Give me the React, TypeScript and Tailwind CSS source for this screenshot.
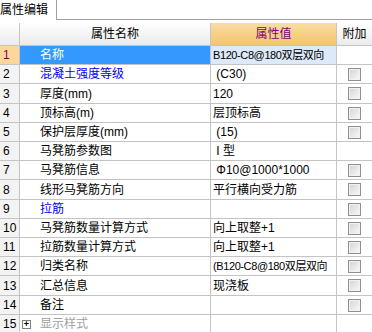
import React from 'react';

interface Row {
  n: number;
  name: string;
  value: string;
  check: boolean;
  blue?: boolean;
  selected?: boolean;
  expand?: boolean;
  tight?: boolean;
}

const rows: Row[] = [
  { n: 1, name: '名称', value: 'B120-C8@180双层双向', check: false, selected: true, tight: true },
  { n: 2, name: '混凝土强度等级', value: ' (C30)', check: true, blue: true },
  { n: 3, name: '厚度(mm)', value: '120', check: true },
  { n: 4, name: '顶标高(m)', value: '层顶标高', check: true },
  { n: 5, name: '保护层厚度(mm)', value: ' (15)', check: true },
  { n: 6, name: '马凳筋参数图', value: ' I 型', check: false },
  { n: 7, name: '马凳筋信息', value: ' Φ10@1000*1000', check: true },
  { n: 8, name: '线形马凳筋方向', value: '平行横向受力筋', check: true },
  { n: 9, name: '拉筋', value: '', check: true, blue: true },
  { n: 10, name: '马凳筋数量计算方式', value: '向上取整+1', check: true },
  { n: 11, name: '拉筋数量计算方式', value: '向上取整+1', check: true },
  { n: 12, name: '归类名称', value: '(B120-C8@180双层双向', check: true, tight: true },
  { n: 13, name: '汇总信息', value: '现浇板', check: true },
  { n: 14, name: '备注', value: '', check: true },
  { n: 15, name: '显示样式', value: '', check: false, expand: true },
];

// row pitch in the grid is ~19.2px, so every fifth row gets one extra pixel
const tallRows = [3, 8, 13];

function CheckBox() {
  return (
    <div className="w-[13px] h-[13px] border border-[#8f8f8f] bg-gradient-to-br from-[#d4d4d4] to-[#fafafa] shadow-[inset_0_0_0_1px_#f2f2f2]" />
  );
}

export default function App() {
  return (
    <div className="w-[372px] h-[332px] overflow-hidden bg-white text-[12px] leading-[14px] text-black font-['Liberation_Sans','Noto_Sans_CJK_SC',sans-serif]">
      {/* Tab strip */}
      <div className="flex h-[20px]">
        <div className="w-[57px] border-r border-[#a0a0a0] flex items-center">属性编辑</div>
        <div className="flex-1 border-b border-[#a0a0a0]" />
      </div>

      <div className="h-[3px]" />

      {/* Header */}
      <div className="flex h-[23px] border-b border-[#c4c4c4]">
        <div className="w-[20px] border-r border-[#c4c4c4] bg-gradient-to-b from-white to-[#ebebeb]" />
        <div className="w-[191px] border-r border-[#c4c4c4] bg-gradient-to-b from-white to-[#ebebeb] flex items-center justify-center">
          属性名称
        </div>
        <div className="w-[126px] border-r border-[#c4c4c4] bg-gradient-to-b from-[#fadca4] to-[#f2c470] text-[#800080] flex items-center justify-center">
          属性值
        </div>
        <div className="flex-1 bg-gradient-to-b from-white to-[#ebebeb] flex items-center justify-center">附加</div>
      </div>

      {/* Rows */}
      {rows.map(r => (
        <div
          key={r.n}
          className={`flex border-b border-[#c4c4c4] ${tallRows.includes(r.n) ? 'h-[20px]' : 'h-[19px]'}`}
        >
          <div
            className={`w-[20px] border-r border-[#c4c4c4] flex items-center pl-[3px] ${
              r.selected ? 'bg-[#fdd79a] text-[#800060]' : 'bg-[#f3f3f3]'
            }`}
          >
            {r.n}
          </div>
          <div
            className={`w-[191px] border-r border-[#c4c4c4] flex items-center whitespace-nowrap ${
              r.expand ? 'pl-[2px]' : 'pl-[20px]'
            } ${r.selected ? 'bg-[#3399ff] text-white' : r.blue ? 'text-[#0000ff]' : ''}`}
          >
            {r.expand && (
              <span className="w-[9px] h-[9px] border border-[#808080] mr-[9px] flex items-center justify-center text-[9px] leading-none font-bold">
                +
              </span>
            )}
            <span className={r.expand ? 'text-[#a0a0a0]' : ''}>{r.name}</span>
          </div>
          <div
            className={`w-[126px] border-r border-[#c4c4c4] flex items-center pl-[2px] whitespace-pre overflow-hidden ${
              r.selected ? 'bg-[#dde9f8]' : ''
            } ${r.tight ? 'text-[11px] tracking-[-0.4px]' : ''}`}
          >
            {r.value}
          </div>
          <div className="flex-1 flex items-center justify-center">{r.check && <CheckBox />}</div>
        </div>
      ))}
    </div>
  );
}
